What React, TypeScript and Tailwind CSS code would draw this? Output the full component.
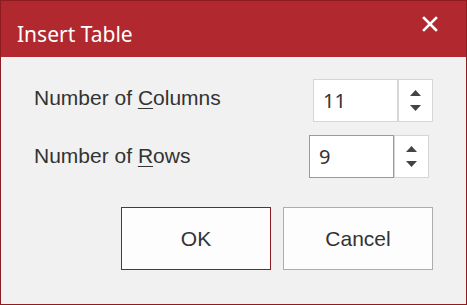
import React from "react";

function Spinner({ value, focused }: { value: string; focused?: boolean }) {
  return (
    <div className="flex h-[43px]">
      <div
        className={
          "flex w-[85px] items-center bg-white pl-[9px] text-[20px] text-[#333] font-['Noto_Sans',sans-serif] border " +
          (focused ? "border-[#9a9a9a]" : "border-[#d6d6d6]")
        }
      >
        {value}
      </div>
      <div className="flex w-[35px] flex-col items-center justify-center gap-[9px] border border-[#d6d6d6] bg-white">
        <svg width="11" height="6" viewBox="0 0 11 6">
          <polygon points="5.5,0 11,6 0,6" fill="#444" />
        </svg>
        <svg width="11" height="6" viewBox="0 0 11 6">
          <polygon points="0,0 11,0 5.5,6" fill="#444" />
        </svg>
      </div>
    </div>
  );
}

export default function App() {
  return (
    <div className="flex h-[305px] w-[467px] flex-col border border-[#8c1c1f] bg-[#f1f1f1] font-['Liberation_Sans',Arial,sans-serif]">
      <div className="flex h-[56px] items-center justify-between bg-[#b1282e] pl-[16px] pr-[28px]">
        <span className="mt-[12px] text-[21px] text-white font-['Noto_Sans',sans-serif]">Insert Table</span>
        <svg width="16" height="16" viewBox="0 0 16 16" className="mb-[10px]">
          <path d="M2 2 L14 14 M14 2 L2 14" stroke="white" strokeWidth="2.6" strokeLinecap="square" />
        </svg>
      </div>
      <div className="flex flex-1 flex-col pt-[22px] text-[21px] text-[#333]">
        <div className="flex items-center justify-between pl-[33px] pr-[33px]">
          <span className="-mt-[6px]">
            Number of <span className="underline underline-offset-[3px] decoration-1">C</span>olumns
          </span>
          <Spinner value="11" />
        </div>
        <div className="mt-[13px] flex items-center justify-between pl-[33px] pr-[37px]">
          <span className="-mt-[2px]">
            Number of <span className="underline underline-offset-[3px] decoration-1">R</span>ows
          </span>
          <Spinner value="9" focused />
        </div>
        <div className="mt-[29px] flex justify-end gap-[12px] pr-[33px]">
          <button className="h-[63px] w-[150px] border border-[#8c1c1f] bg-[#fdfdfd] text-[21px] text-[#333]">OK</button>
          <button className="h-[63px] w-[150px] border border-[#adadad] bg-[#fdfdfd] text-[21px] text-[#333]">Cancel</button>
        </div>
      </div>
    </div>
  );
}
